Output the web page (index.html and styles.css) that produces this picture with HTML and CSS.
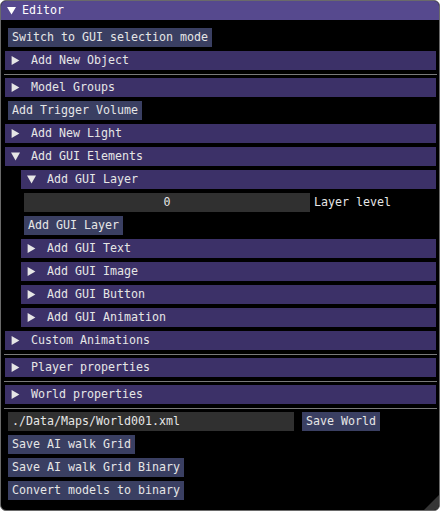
FILE: index.html
```html
<!DOCTYPE html>
<html>
<head>
<meta charset="utf-8">
<link rel="stylesheet" href="styles.css">
</head>
<body>
<div class="window">
  <div class="titlebar">
    <svg class="arrow" width="13" height="19" viewBox="0 0 13 19"><polygon points="2,6 11,6 6.5,13.4"/></svg>
    <span class="title">Editor</span>
  </div>
  <div class="content">
    <button class="btn">Switch to GUI selection mode</button>
    <div class="header"><svg class="arrow" width="13" height="19" viewBox="0 0 13 19"><polygon points="2.6,5 10.4,9.5 2.6,14"/></svg><span class="htext">Add New Object</span></div>
    <div class="sep"></div>
    <div class="header"><svg class="arrow" width="13" height="19" viewBox="0 0 13 19"><polygon points="2.6,5 10.4,9.5 2.6,14"/></svg><span class="htext">Model Groups</span></div>
    <button class="btn">Add Trigger Volume</button>
    <div class="header"><svg class="arrow" width="13" height="19" viewBox="0 0 13 19"><polygon points="2.6,5 10.4,9.5 2.6,14"/></svg><span class="htext">Add New Light</span></div>
    <div class="header"><svg class="arrow" width="13" height="19" viewBox="0 0 13 19"><polygon points="2,5.6 11,5.6 6.5,13.4"/></svg><span class="htext">Add GUI Elements</span></div>
    <div class="indent">
      <div class="header"><svg class="arrow" width="13" height="19" viewBox="0 0 13 19"><polygon points="2,5.6 11,5.6 6.5,13.4"/></svg><span class="htext">Add GUI Layer</span></div>
      <div class="row">
        <div class="input centered">0</div>
        <span class="label">Layer level</span>
      </div>
      <button class="btn">Add GUI Layer</button>
      <div class="header"><svg class="arrow" width="13" height="19" viewBox="0 0 13 19"><polygon points="2.6,5 10.4,9.5 2.6,14"/></svg><span class="htext">Add GUI Text</span></div>
      <div class="header"><svg class="arrow" width="13" height="19" viewBox="0 0 13 19"><polygon points="2.6,5 10.4,9.5 2.6,14"/></svg><span class="htext">Add GUI Image</span></div>
      <div class="header"><svg class="arrow" width="13" height="19" viewBox="0 0 13 19"><polygon points="2.6,5 10.4,9.5 2.6,14"/></svg><span class="htext">Add GUI Button</span></div>
      <div class="header"><svg class="arrow" width="13" height="19" viewBox="0 0 13 19"><polygon points="2.6,5 10.4,9.5 2.6,14"/></svg><span class="htext">Add GUI Animation</span></div>
    </div>
    <div class="header"><svg class="arrow" width="13" height="19" viewBox="0 0 13 19"><polygon points="2.6,5 10.4,9.5 2.6,14"/></svg><span class="htext">Custom Animations</span></div>
    <div class="sep"></div>
    <div class="header"><svg class="arrow" width="13" height="19" viewBox="0 0 13 19"><polygon points="2.6,5 10.4,9.5 2.6,14"/></svg><span class="htext">Player properties</span></div>
    <div class="sep"></div>
    <div class="header"><svg class="arrow" width="13" height="19" viewBox="0 0 13 19"><polygon points="2.6,5 10.4,9.5 2.6,14"/></svg><span class="htext">World properties</span></div>
    <div class="sep"></div>
    <div class="row">
      <div class="input">./Data/Maps/World001.xml</div>
      <button class="btn save">Save World</button>
    </div>
    <button class="btn">Save AI walk Grid</button>
    <button class="btn">Save AI walk Grid Binary</button>
    <button class="btn">Convert models to binary</button>
  </div>
  <div class="grip"></div>
</div>
</body>
</html>
```

FILE: styles.css
```css
* { box-sizing: border-box; }

html, body {
  margin: 0;
  padding: 0;
  background: #ffffff;
}

body {
  font-family: "DejaVu Sans Mono", "Liberation Mono", monospace;
  font-size: 11.63px;
  color: #e6e6e6;
}

.window {
  position: relative;
  width: 440px;
  height: 511px;
  background: #000000;
  border: 1px solid #6a6a6a;
  border-radius: 6px;
  overflow: hidden;
}

.titlebar {
  height: 19px;
  background: #56498e;
  display: flex;
  align-items: center;
  padding-left: 4px;
  color: #ffffff;
}

.titlebar .title {
  margin-left: 4px;
  line-height: 19px;
}

.arrow {
  display: block;
  flex: none;
  fill: #e6e6e6;
}

.titlebar .arrow { fill: #ffffff; }

.content {
  display: flex;
  flex-direction: column;
  align-items: flex-start;
  gap: 4px;
  padding: 8px 3px 0 4px;
}

.btn {
  all: unset;
  box-sizing: border-box;
  display: block;
  height: 19px;
  line-height: 19px;
  padding: 0 4px;
  margin-left: 3px;
  background: #3a3f62;
  color: #e6e6e6;
  font-family: inherit;
  font-size: inherit;
  white-space: pre;
}

.header {
  align-self: stretch;
  height: 19px;
  background: #3c3168;
  display: flex;
  align-items: center;
  padding-left: 4px;
  white-space: pre;
}

.htext {
  margin-left: 9px;
  line-height: 19px;
}

.sep {
  align-self: stretch;
  height: 1px;
  margin: 0 -1px -1px -1px;
  background: #7a7a7a;
}

.indent {
  align-self: stretch;
  margin-left: 16px;
  display: flex;
  flex-direction: column;
  align-items: flex-start;
  gap: 4px;
}

.row {
  display: flex;
  align-items: center;
  margin-left: 3px;
}

.input {
  width: 286px;
  height: 19px;
  line-height: 19px;
  padding: 0 4px;
  background: #303030;
  white-space: pre;
}

.input.centered { text-align: center; }

.label {
  margin-left: 4px;
  line-height: 19px;
}

.row .btn.save { margin-left: 8px; }

.grip {
  position: absolute;
  right: 0;
  bottom: 0;
  width: 15px;
  height: 15px;
  background: #353535;
  clip-path: polygon(100% 0, 100% 100%, 0 100%);
}
```
